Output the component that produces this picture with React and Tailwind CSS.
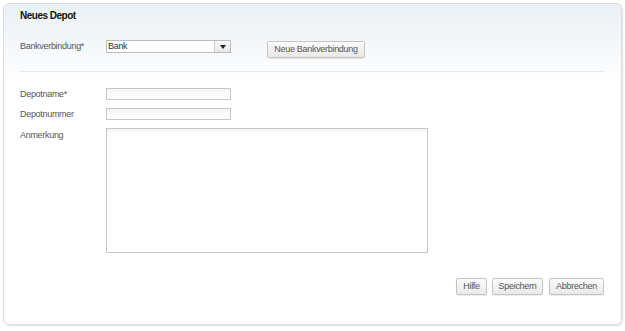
export default function App() {
  return (
    <div className="w-[625px] h-[331px] bg-white p-[3px] pb-[6px] font-['Liberation_Sans',Arial,sans-serif] text-[9px] tracking-[-0.3px] text-[#555]">
      <div className="h-full rounded-[6px] border border-[#dcdcdc] shadow-[1px_1px_2px_rgba(0,0,0,0.12)] bg-gradient-to-b from-[#eaf0f5] via-white via-[25%] to-white flex flex-col px-[16px]">
        <h1 className="mt-[5px] text-[10px] tracking-[-0.5px] font-bold text-[#111] leading-[13px]">Neues Depot</h1>

        <div className="mt-[15px] flex items-start">
          <label className="w-[86px] mt-[3px] leading-[12px]">Bankverbindung*</label>
          <div className="mt-[3px] flex h-[13px] w-[125px] border border-[#bdbdbd] bg-white">
            <span className="flex-1 pl-[1px] leading-[11px] text-[#333]">Bank</span>
            <span className="w-[16px] border-l border-[#cfcfcf] bg-gradient-to-b from-[#fafafa] to-[#e6e6e6] flex items-center justify-center">
              <svg width="6" height="4" viewBox="0 0 6 4"><path d="M0 0h6L3 4z" fill="#222" /></svg>
            </span>
          </div>
          <button className="ml-[36px] mt-[4px] h-[17px] w-[98px] whitespace-nowrap border border-[#c4c4c4] rounded-[2px] bg-gradient-to-b from-[#fbfbfb] to-[#e9e9e9] shadow-[0_1px_1px_rgba(0,0,0,0.08)] text-[#555] leading-[15px]">
            Neue Bankverbindung
          </button>
        </div>

        <div className="mt-[13px] h-px bg-[#e3e9ee]" />

        <div className="mt-[16px] flex items-start">
          <label className="w-[86px] leading-[12px]">Depotname*</label>
          <div className="h-[12px] w-[125px] border border-[#c6c6c6] bg-gradient-to-b from-[#f5f5f5] to-white" />
        </div>
        <div className="mt-[8px] flex items-start">
          <label className="w-[86px] leading-[12px]">Depotnummer</label>
          <div className="h-[12px] w-[125px] border border-[#c6c6c6] bg-gradient-to-b from-[#f5f5f5] to-white" />
        </div>
        <div className="mt-[8px] flex items-start">
          <label className="w-[86px] mt-[1px] leading-[12px]">Anmerkung</label>
          <div className="h-[125px] w-[322px] border border-[#c6c6c6] bg-gradient-to-b from-[#f3f3f3] via-white via-[4%] to-white" />
        </div>

        <div className="mt-[25px] flex justify-end gap-[5px] pr-[1px] text-[#555]">
          <button className="h-[17px] w-[31px] border border-[#c4c4c4] rounded-[2px] bg-gradient-to-b from-[#fbfbfb] to-[#e9e9e9] shadow-[0_1px_1px_rgba(0,0,0,0.08)] leading-[15px]">Hilfe</button>
          <button className="h-[17px] w-[51px] border border-[#c4c4c4] rounded-[2px] bg-gradient-to-b from-[#fbfbfb] to-[#e9e9e9] shadow-[0_1px_1px_rgba(0,0,0,0.08)] leading-[15px]">Speichern</button>
          <button className="ml-[1px] h-[17px] w-[55px] border border-[#c4c4c4] rounded-[2px] bg-gradient-to-b from-[#fbfbfb] to-[#e9e9e9] shadow-[0_1px_1px_rgba(0,0,0,0.08)] leading-[15px]">Abbrechen</button>
        </div>
      </div>
    </div>
  );
}
